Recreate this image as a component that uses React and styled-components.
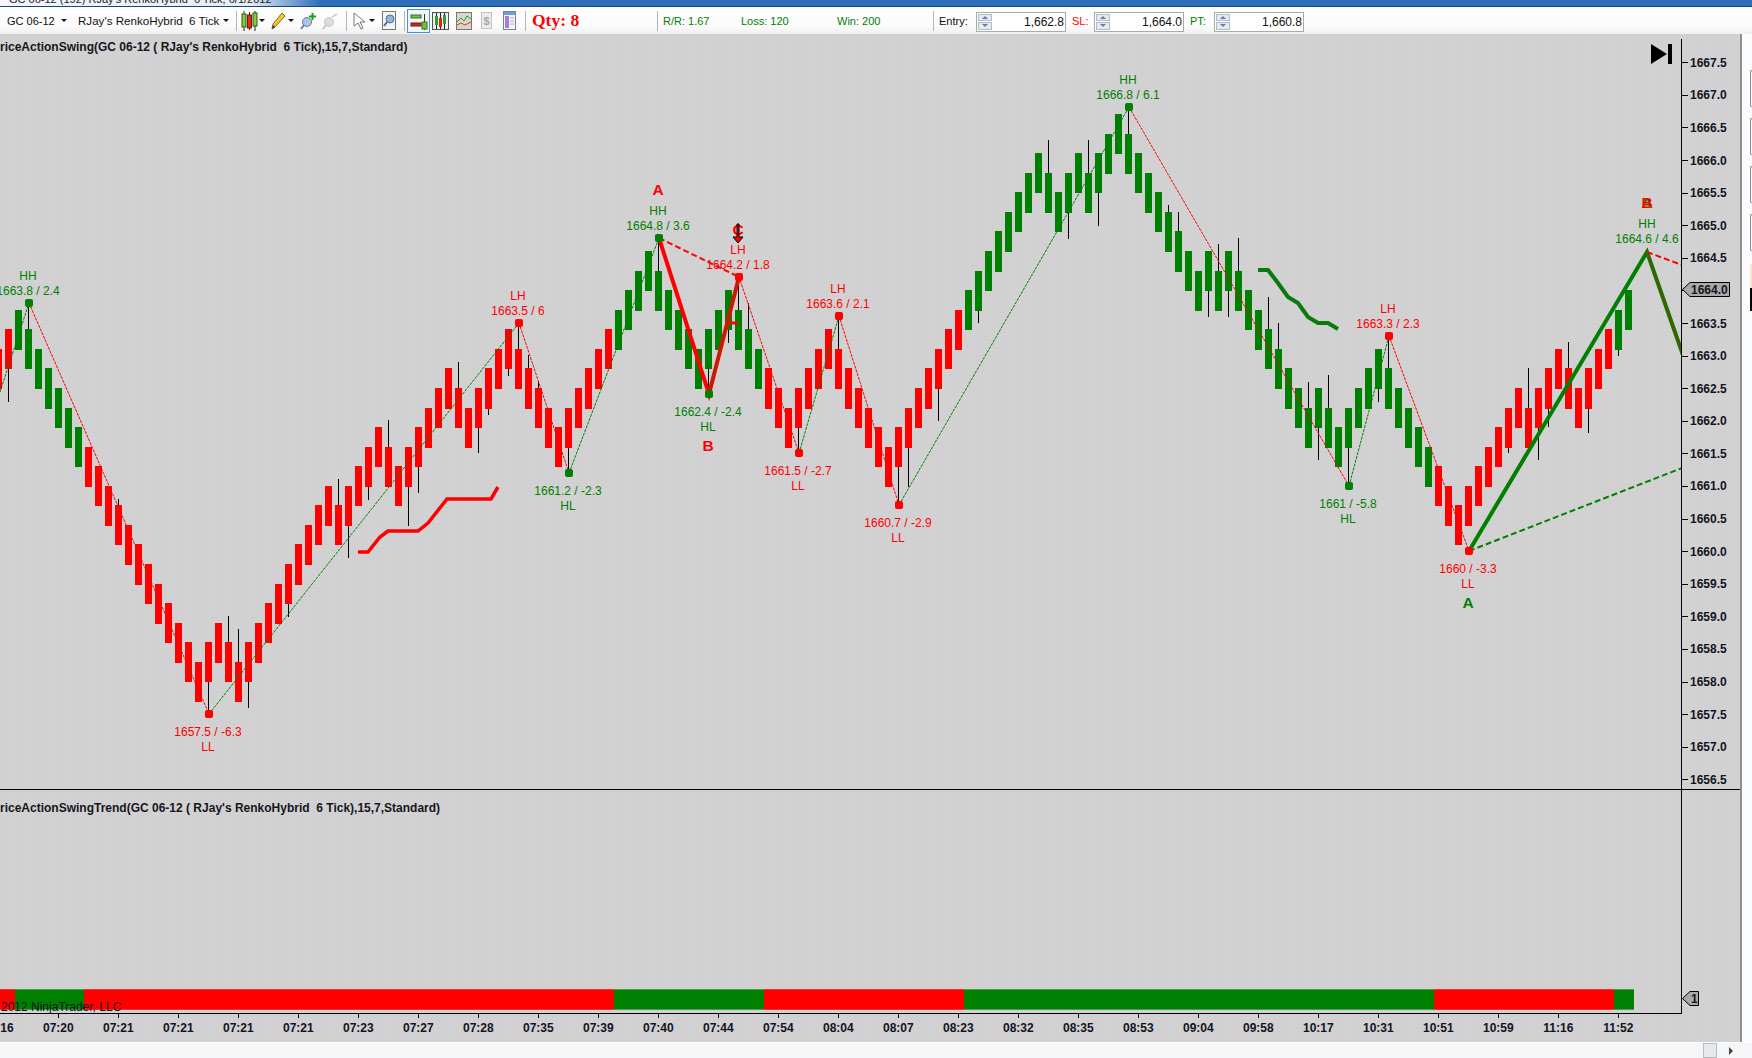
import React from "react";
import styled, { createGlobalStyle } from "styled-components";

const RED = "#ff0000";
const GREEN = "#008000";

// renko bars: top level of each brick starting at column -1
const levels = [
  2, 1, 0, 1, 2, 3, 4, 5, 6, 7, 8, 9, 10, 11, 12, 13, 14, 15, 16, 17, 18, 17, 16, 17, 18, 17, 16, 15, 14, 13, 12, 11,
  10, 9, 10, 9, 8, 7, 6, 7, 8, 7, 6, 5, 4, 3, 4, 5, 4, 3, 2, 1, 2, 3, 4, 5, 6, 5, 4, 3, 2, 1, 0, -1, -2, -3, -2, -1,
  0, 1, 2, 1, 0, -1, 0, 1, 2, 3, 4, 5, 4, 3, 2, 1, 2, 3, 4, 5, 6, 7, 6, 5, 4, 3, 2, 1, 0, -1, -2, -3, -4, -5, -6, -7,
  -8, -7, -6, -7, -8, -7, -8, -9, -10, -9, -8, -7, -6, -5, -4, -3, -2, -3, -2, -3, -2, -1, 0, 1, 2, 3, 4, 5, 4, 5, 6,
  5, 4, 3, 2, 3, 4, 5, 6, 7, 8, 9, 10, 9, 8, 7, 6, 5, 4, 5, 4, 3, 2, 3, 4, 3, 2, 1, 0, -1,
];

// trend runs, first column and last column of each colour
const runs = [
  { from: -1, to: 0, color: RED, left: 0, right: 14.5 },
  { from: 1, to: 7, color: GREEN, left: 14.5, right: 84 },
  { from: 8, to: 60, color: RED, left: 84, right: 614 },
  { from: 61, to: 75, color: GREEN, left: 614, right: 764 },
  { from: 76, to: 95, color: RED, left: 764, right: 964 },
  { from: 96, to: 142, color: GREEN, left: 964, right: 1434 },
  { from: 143, to: 160, color: RED, left: 1434, right: 1614 },
  { from: 161, to: 162, color: GREEN, left: 1614, right: 1634 },
];

// column: [wick top y, wick bottom y]
const wicks = {
  0: [0, 402], 2: [303, 0], 11: [499, 0], 20: [0, 713], 22: [616, 0], 23: [629, 0], 24: [0, 708], 28: [0, 617],
  33: [479, 0], 34: [0, 558], 36: [0, 500], 38: [420, 0], 40: [0, 526], 41: [0, 493], 45: [362, 0], 47: [0, 453],
  48: [0, 415], 50: [0, 376], 51: [323, 0], 52: [355, 0], 53: [381, 0], 56: [0, 473], 65: [238, 0], 70: [0, 393],
  72: [0, 343], 73: [277, 0], 74: [303, 0], 79: [0, 453], 83: [316, 0], 89: [0, 505], 90: [0, 487], 93: [0, 421],
  97: [0, 323], 104: [140, 0], 106: [0, 239], 108: [140, 0], 109: [0, 226], 112: [107, 0], 116: [205, 0],
  117: [212, 0], 120: [0, 317], 121: [244, 0], 122: [0, 317], 123: [238, 0], 126: [297, 0], 127: [323, 0],
  130: [382, 0], 131: [0, 460], 132: [375, 0], 134: [0, 486], 137: [0, 402], 138: [337, 0], 150: [0, 453],
  152: [368, 0], 153: [0, 460], 154: [0, 427], 156: [342, 0], 158: [0, 433], 161: [0, 356],
};

const swingPoints = [
  [0, 392], [29, 303, GREEN], [209, 714, RED], [519, 323, RED], [569, 473, GREEN], [659, 238, GREEN], [709, 394, GREEN],
  [739, 277, RED], [799, 453, RED], [839, 316, RED], [899, 505, RED], [1129, 107, GREEN], [1349, 486, GREEN],
  [1389, 336, RED], [1469, 551, RED],
];

const swingLabels = [
  { x: 28, y: 276, text: "HH", color: GREEN },
  { x: 28, y: 291, text: "1663.8 / 2.4", color: GREEN },
  { x: 208, y: 732, text: "1657.5 / -6.3", color: RED },
  { x: 208, y: 747, text: "LL", color: RED },
  { x: 518, y: 296, text: "LH", color: RED },
  { x: 518, y: 311, text: "1663.5 / 6", color: RED },
  { x: 568, y: 491, text: "1661.2 / -2.3", color: GREEN },
  { x: 568, y: 506, text: "HL", color: GREEN },
  { x: 658, y: 211, text: "HH", color: GREEN },
  { x: 658, y: 226, text: "1664.8 / 3.6", color: GREEN },
  { x: 708, y: 412, text: "1662.4 / -2.4", color: GREEN },
  { x: 708, y: 427, text: "HL", color: GREEN },
  { x: 738, y: 250, text: "LH", color: RED },
  { x: 738, y: 265, text: "1664.2 / 1.8", color: RED },
  { x: 838, y: 289, text: "LH", color: RED },
  { x: 838, y: 304, text: "1663.6 / 2.1", color: RED },
  { x: 798, y: 471, text: "1661.5 / -2.7", color: RED },
  { x: 798, y: 486, text: "LL", color: RED },
  { x: 898, y: 523, text: "1660.7 / -2.9", color: RED },
  { x: 898, y: 538, text: "LL", color: RED },
  { x: 1128, y: 80, text: "HH", color: GREEN },
  { x: 1128, y: 95, text: "1666.8 / 6.1", color: GREEN },
  { x: 1348, y: 504, text: "1661 / -5.8", color: GREEN },
  { x: 1348, y: 519, text: "HL", color: GREEN },
  { x: 1388, y: 309, text: "LH", color: RED },
  { x: 1388, y: 324, text: "1663.3 / 2.3", color: RED },
  { x: 1468, y: 569, text: "1660 / -3.3", color: RED },
  { x: 1468, y: 584, text: "LL", color: RED },
  { x: 1647, y: 224, text: "HH", color: GREEN },
  { x: 1647, y: 239, text: "1664.6 / 4.6", color: GREEN },
];

const abcLabels = [
  { x: 658, y: 189, text: "A", color: RED },
  { x: 708, y: 445, text: "B", color: RED },
  { x: 738, y: 229, text: "C", color: RED },
  { x: 1468, y: 602, text: "A", color: GREEN },
  { x: 1647, y: 202, text: "A", color: GREEN },
  { x: 1647, y: 202, text: "B", color: RED },
];

const priceTicks = Array.from({ length: 23 }, (_, i) => (1667.5 - i * 0.5).toFixed(1));

const times = [
  "07:16", "07:20", "07:21", "07:21", "07:21", "07:21", "07:23", "07:27", "07:28", "07:35", "07:39", "07:40", "07:44",
  "07:54", "08:04", "08:07", "08:23", "08:32", "08:35", "08:53", "09:04", "09:58", "10:17", "10:31", "10:51", "10:59",
  "11:16", "11:52",
];

const levelY = (n) => Math.round(309.7 + 19.56 * n);
const priceY = (i) => 62.3 + i * 32.59;

function colorOf(column) {
  const run = runs.find((r) => column >= r.from && column <= r.to);
  return run.color;
}

const GlobalStyle = createGlobalStyle`
  html, body {
    margin: 0;
    padding: 0;
    overflow: hidden;
    background: #ffffff;
  }
  body {
    font-family: "Liberation Sans", Arial, sans-serif;
  }
`;

const Page = styled.div`
  width: 1752px;
  height: 1058px;
  display: flex;
  flex-direction: column;
  overflow: hidden;
`;

const TitleBar = styled.div`
  height: 6px;
  flex: none;
  overflow: hidden;
  background: linear-gradient(90deg, #f2f5f9 0, #e8edf3 250px, #2f6fb9 320px, #2f6fb9 100%);
  border-bottom: 1px solid #17467f;
`;

const TitleText = styled.div`
  margin: -8px 0 0 9px;
  font-size: 11px;
  line-height: 14px;
  color: #222222;
  white-space: pre;
`;

const Toolbar = styled.div`
  height: 27px;
  flex: none;
  display: flex;
  align-items: center;
  padding-left: 7px;
  background: linear-gradient(180deg, #ffffff 0, #fbfbfb 70%, #f0f0f0 100%);
`;

const ToolText = styled.span`
  flex: none;
  width: ${(p) => p.$w}px;
  margin-left: ${(p) => p.$ml || 0}px;
  font-size: ${(p) => p.$size || 11}px;
  color: ${(p) => p.$color || "#111111"};
  white-space: pre;
`;

const Caret = styled.span`
  flex: none;
  width: 7px;
  height: 3px;
  margin-left: ${(p) => p.$ml || 0}px;
  display: flex;
  justify-content: center;
  &::before {
    content: "";
    border-left: 3px solid transparent;
    border-right: 3px solid transparent;
    border-top: 3px solid #111111;
  }
`;

const Separator = styled.span`
  flex: none;
  width: 1px;
  height: 20px;
  margin-left: ${(p) => p.$ml}px;
  background: #b4b4b4;
`;

const ToolIcon = styled.svg`
  flex: none;
  margin-left: ${(p) => p.$ml || 0}px;
`;

const ActiveTool = styled.span`
  flex: none;
  box-sizing: border-box;
  width: 23px;
  height: 24px;
  margin-left: ${(p) => p.$ml}px;
  margin-right: -1px;
  border: 1px solid #4a90d8;
  background: #eef6fd;
  display: flex;
  align-items: center;
  justify-content: center;
`;

const Qty = styled.span`
  flex: none;
  width: 47px;
  margin-left: 6px;
  font-family: "Liberation Serif", "Times New Roman", serif;
  font-weight: 700;
  font-size: 17.5px;
  color: ${RED};
  white-space: pre;
`;

const SpinBox = styled.span`
  flex: none;
  box-sizing: border-box;
  width: 90px;
  height: 20px;
  margin-top: 2px;
  display: flex;
  align-items: center;
  background: #ffffff;
  border: 1px solid #a6aca6;
`;

const SpinButtons = styled.span`
  flex: none;
  width: 14px;
  height: 16px;
  margin-left: 1px;
  display: flex;
  flex-direction: column;
  gap: 1px;
`;

const SpinButton = styled.span`
  flex: 1;
  display: flex;
  align-items: center;
  justify-content: center;
  background: #e4eaf2;
  border: 1px solid #b3bdc9;
  box-sizing: border-box;
  &::before {
    content: "";
    border-left: 3px solid transparent;
    border-right: 3px solid transparent;
    ${(p) => (p.$down ? "border-top: 3px solid #6a7ba8;" : "border-bottom: 3px solid #6a7ba8;")}
  }
`;

const SpinValue = styled.span`
  flex: 1;
  text-align: right;
  padding-right: 1px;
  font-size: 12px;
  color: #111111;
`;

const ChartRow = styled.div`
  height: 1008px;
  flex: none;
  display: flex;
`;

const Main = styled.div`
  width: 1740px;
  flex: none;
  display: flex;
  flex-direction: column;
  background-color: #d1d2d1;
  background-image: radial-gradient(circle, rgba(196, 192, 218, 0.22) 0.7px, transparent 0.9px),
    radial-gradient(circle, rgba(226, 196, 204, 0.24) 0.7px, transparent 0.9px);
  background-size: 4px 4px, 5px 3px;
  border-right: 2px solid #8c8f94;
`;

const PricePanel = styled.div`
  position: relative;
  height: 755px;
  flex: none;
  border-bottom: 1px solid #000000;
`;

const PanelTitle = styled.div`
  position: absolute;
  left: 0;
  top: ${(p) => p.$top}px;
  font-size: 12px;
  font-weight: 700;
  line-height: 14px;
  color: #16161c;
  white-space: pre;
`;

const PlotSvg = styled.svg`
  display: block;
`;

const SwingLabel = styled.text`
  font-family: "Liberation Sans", Arial, sans-serif;
  font-size: 12px;
  fill: ${(p) => p.$color};
  text-anchor: middle;
`;

const WaveLabel = styled.text`
  font-family: "Liberation Sans", Arial, sans-serif;
  font-size: 15.5px;
  font-weight: 700;
  fill: ${(p) => p.$color};
  text-anchor: middle;
`;

const AxisLabel = styled.text`
  font-family: "Liberation Sans", Arial, sans-serif;
  font-size: 12px;
  font-weight: 700;
  fill: #14141e;
`;

const TrendPanel = styled.div`
  position: relative;
  height: 224px;
  flex: none;
`;

const TrendPlot = styled.div`
  box-sizing: border-box;
  width: 1682px;
  height: 224px;
  border-right: 1px solid #000000;
  border-bottom: 1px solid #000000;
  overflow: hidden;
  display: flex;
  align-items: flex-end;
  padding-bottom: 3px;
`;

const TrendSegment = styled.div`
  height: 21px;
  flex: none;
  box-sizing: border-box;
  width: ${(p) => p.$w}px;
  background: ${(p) => p.$color};
  border-top: 1px solid ${(p) => (p.$color === RED ? "#f03030" : "#4f9a4f")};
  border-bottom: 1px solid ${(p) => (p.$color === RED ? "#f03030" : "#4f9a4f")};
`;

const Copyright = styled.span`
  position: absolute;
  left: 1px;
  bottom: 0;
  font-size: 12px;
  line-height: 13px;
  color: #14141e;
  white-space: pre;
`;

const PanelMarker = styled.svg`
  position: absolute;
  left: 1682px;
  top: 201px;
`;

const TimeAxis = styled.div`
  flex: 1;
  width: 1739px;
  display: flex;
  overflow: hidden;
  margin-left: -31.7px;
`;

const TimeCell = styled.div`
  position: relative;
  flex: none;
  width: 60px;
  padding-top: 7px;
  text-align: center;
  font-size: 12px;
  font-weight: 700;
  line-height: 14px;
  color: #14141e;
  &::before {
    content: "";
    position: absolute;
    left: 30px;
    top: 0;
    width: 1px;
    height: 4px;
    background: #000000;
  }
`;

const SidePanel = styled.div`
  flex: 1;
  background: #fbfcfe;
  padding-top: 36px;
  display: flex;
  flex-direction: column;
  align-items: flex-end;
  gap: 11px;
`;

const SideButton = styled.div`
  box-sizing: border-box;
  width: 2px;
  height: 37px;
  border: 1px solid #8d8d8d;
  border-right: none;
  border-radius: 3px 0 0 3px;
`;

const SideSwatch = styled.div`
  width: 2px;
  height: 47px;
  margin-top: 2px;
  background: linear-gradient(180deg, #fbe6cf 0, #fbe6cf 50%, #000000 50%, #000000 100%);
`;

const StatusBar = styled.div`
  flex: 1;
  display: flex;
  align-items: center;
  background: #f4f6f8;
  border-top: 1px solid #ffffff;
`;

const ScrollThumb = styled.div`
  box-sizing: border-box;
  width: 14px;
  height: 15px;
  margin-left: 1703px;
  background: #e6e9ec;
  border: 1px solid #b9bdc2;
`;

const ScrollArrow = styled.div`
  margin-left: 12px;
  border-top: 4px solid transparent;
  border-bottom: 4px solid transparent;
  border-left: 4px solid #444444;
`;

function CandlesIcon() {
  return (
    <ToolIcon $ml={4} width="17" height="20" viewBox="0 0 17 20">
      <path d="M3 0v20M8.500 1v18M14 0v20" stroke="#222" />
      <rect x="1" y="3" width="4" height="13" fill="#7fd03a" stroke="#2b5a12" />
      <rect x="6.500" y="4" width="4" height="13" fill="#e02b20" stroke="#7a1510" />
      <rect x="12" y="2" width="4" height="13" fill="#7fd03a" stroke="#2b5a12" />
    </ToolIcon>
  );
}

function PencilIcon() {
  return (
    <ToolIcon $ml={6} width="15" height="18" viewBox="0 0 15 18">
      <path d="M1 17l1-5L11 1l3 3L4 15z" fill="#f3c92f" stroke="#8a6a12" />
      <path d="M1 17l1-4 2 2z" fill="#333" />
    </ToolIcon>
  );
}

function MarkerIcon({ $ml, faded }) {
  return (
    <ToolIcon $ml={$ml} width="17" height="18" viewBox="0 0 17 18">
      <circle cx="7" cy="10" r="4.500" fill={faded ? "#dcdcdc" : "#a9c6e8"} stroke={faded ? "#c4c4c4" : "#6b7f99"} />
      <path d="M4 13l-3 4" stroke={faded ? "#c4c4c4" : "#6b7f99"} strokeWidth="2" />
      {faded ? (
        <path d="M10 5l5-3" stroke="#cfcfcf" strokeWidth="2" />
      ) : (
        <path d="M12.500 1v7M9 4.500h7" stroke="#18a018" strokeWidth="2" />
      )}
    </ToolIcon>
  );
}

function CursorIcon() {
  return (
    <ToolIcon $ml={6} width="13" height="18" viewBox="0 0 13 18">
      <path d="M1 1l11 9-5 0 3 6-2 1-3-6-4 3z" fill="#ffffff" stroke="#777" />
    </ToolIcon>
  );
}

function ZoomIcon() {
  return (
    <ToolIcon $ml={7} width="14" height="19" viewBox="0 0 14 19">
      <rect x="0.500" y="0.500" width="13" height="18" fill="#f4f4f4" stroke="#777" />
      <circle cx="8" cy="8" r="4" fill="#8db8e6" stroke="#5a6e88" />
      <path d="M5 11l-3 4" stroke="#5a6e88" strokeWidth="2" />
    </ToolIcon>
  );
}

function BarsIcon() {
  return (
    <svg width="18" height="20" viewBox="0 0 18 20">
      <path d="M14.500 3v16" stroke="#333" />
      <rect x="1" y="4" width="10" height="3" fill="#6fc23a" stroke="#3c6f1c" />
      <rect x="1" y="12" width="10" height="3" fill="#d8261c" stroke="#7a1510" />
      <rect x="12" y="11" width="5" height="7" fill="#6fc23a" stroke="#3c6f1c" />
    </svg>
  );
}

function CandleBoxIcon() {
  return (
    <ToolIcon $ml={3} width="17" height="20" viewBox="0 0 17 20">
      <rect x="0.500" y="1.500" width="16" height="17" fill="#eeeeee" stroke="#555" />
      <path d="M4.500 2v16M8.500 2v16M12.500 2v16" stroke="#222" />
      <rect x="3" y="5" width="3" height="9" fill="#2fa02f" />
      <rect x="7" y="7" width="3" height="9" fill="#d8261c" />
      <rect x="11" y="4" width="3" height="9" fill="#2fa02f" />
    </ToolIcon>
  );
}

function LineChartIcon() {
  return (
    <ToolIcon $ml={7} width="16" height="18" viewBox="0 0 16 18">
      <rect x="0.500" y="0.500" width="15" height="17" fill="#d8d8c8" stroke="#777" />
      <path d="M1 10l4-4 3 3 3-5 4 3" fill="none" stroke="#2a9a2a" />
      <path d="M1 13l4-2 4 2 6-3" fill="none" stroke="#d83a2a" />
    </ToolIcon>
  );
}

function DollarIcon() {
  return (
    <ToolIcon $ml={9} width="11" height="17" viewBox="0 0 11 17">
      <rect x="0.500" y="0.500" width="10" height="16" fill="#ececec" stroke="#c2c2c2" />
      <text x="5.500" y="13" textAnchor="middle" fontSize="11" fontWeight="700" fontFamily="Liberation Sans" fill="#a8a8a8">
        $
      </text>
    </ToolIcon>
  );
}

function FormIcon() {
  return (
    <ToolIcon $ml={11} width="13" height="19" viewBox="0 0 13 19">
      <rect x="0.500" y="0.500" width="12" height="18" fill="#f2f4fa" stroke="#777f99" />
      <rect x="1" y="1" width="11" height="3" fill="#6aa0dc" />
      <rect x="2" y="5" width="4" height="12" fill="#a87ae0" />
      <path d="M7 7h4M7 10h4M7 13h4" stroke="#b0b0b0" />
    </ToolIcon>
  );
}

function SpinInput({ value }) {
  return (
    <SpinBox>
      <SpinButtons>
        <SpinButton />
        <SpinButton $down />
      </SpinButtons>
      <SpinValue>{value}</SpinValue>
    </SpinBox>
  );
}

function ChartToolbar() {
  return (
    <Toolbar>
      <ToolText $w={53}>GC 06-12</ToolText>
      <Caret />
      <ToolText $w={144} $ml={11} $size={11.6}>
        RJay's RenkoHybrid  6 Tick
      </ToolText>
      <Caret />
      <Separator $ml={7} />
      <CandlesIcon />
      <Caret />
      <PencilIcon />
      <Caret $ml={1} />
      <MarkerIcon $ml={6} />
      <MarkerIcon $ml={5} faded />
      <Separator $ml={7} />
      <CursorIcon />
      <Caret $ml={2} />
      <ZoomIcon />
      <Separator $ml={8} />
      <ActiveTool $ml={2}>
        <BarsIcon />
      </ActiveTool>
      <CandleBoxIcon />
      <LineChartIcon />
      <DollarIcon />
      <FormIcon />
      <Separator $ml={9} />
      <Qty>Qty: 8</Qty>
      <Separator $ml={78} />
      <ToolText $w={78} $ml={5} $color={GREEN}>
        R/R: 1.67
      </ToolText>
      <ToolText $w={96} $color={GREEN}>
        Loss: 120
      </ToolText>
      <ToolText $w={96} $color={GREEN}>
        Win: 200
      </ToolText>
      <Separator $ml={0} />
      <ToolText $w={37} $ml={5}>
        Entry:
      </ToolText>
      <SpinInput value="1,662.8" />
      <ToolText $w={22} $ml={6} $color={RED}>
        SL:
      </ToolText>
      <SpinInput value="1,664.0" />
      <ToolText $w={24} $ml={6} $color={GREEN}>
        PT:
      </ToolText>
      <SpinInput value="1,660.8" />
    </Toolbar>
  );
}

function Bricks() {
  return levels.map((n, i) => {
    const column = i - 1;
    const x = 5 + 10 * column;
    const top = levelY(n);
    const wick = wicks[column];
    return (
      <g key={column}>
        {wick && wick[0] > 0 && <rect x={x + 3} y={wick[0]} width="1" height={top - wick[0]} fill="#000" />}
        {wick && wick[1] > 0 && <rect x={x + 3} y={levelY(n + 2)} width="1" height={wick[1] - levelY(n + 2)} fill="#000" />}
        <rect x={x} y={top} width="7" height={levelY(n + 2) - top + 1} fill={colorOf(column)} />
      </g>
    );
  });
}

function SwingLines() {
  return swingPoints.slice(1).map((p, i) => {
    const prev = swingPoints[i];
    const color = p[1] > prev[1] ? RED : GREEN;
    return (
      <line
        key={p[0]}
        x1={prev[0]}
        y1={prev[1]}
        x2={p[0]}
        y2={p[1]}
        stroke={color}
        strokeWidth="1"
        strokeDasharray="3 1"
      />
    );
  });
}

function PriceAxis() {
  return (
    <g>
      <line x1="1681.5" y1="39" x2="1681.5" y2="789" stroke="#000" />
      {priceTicks.map((label, i) => (
        <g key={label}>
          <line x1="1682" x2="1688" y1={Math.round(priceY(i)) + 0.5} y2={Math.round(priceY(i)) + 0.5} stroke="#000" />
          <AxisLabel x="1690" y={priceY(i) + 4.5}>
            {label}
          </AxisLabel>
        </g>
      ))}
      <polygon points="1682.500,289.500 1690,282.500 1729.500,282.500 1729.500,296.500 1690,296.500" fill="#a9a9a9" stroke="#000" />
      <AxisLabel x="1691" y="294">
        1664.0
      </AxisLabel>
    </g>
  );
}

function PriceChart() {
  return (
    <PlotSvg width="1740" height="755" viewBox="0 34 1740 755">
      <defs>
        <clipPath id="plot">
          <rect x="0" y="34" width="1681" height="755" />
        </clipPath>
      </defs>
      <g clipPath="url(#plot)">
        <Bricks />
        <polyline
          points="358,552 368,552 380,537 388,531 418,531 428,523 447,499 491,499 498,487"
          fill="none"
          stroke={RED}
          strokeWidth="3.5"
        />
        <polyline
          points="1258,270 1268,270 1278,283 1288,297 1298,303 1308,317 1318,323 1328,323 1338,329"
          fill="none"
          stroke="#0a7a0a"
          strokeWidth="4"
        />
        <polyline points="659,238 709,394 739,277" fill="none" stroke={RED} strokeWidth="4" />
        <line x1="659" y1="238" x2="739" y2="277" stroke={RED} strokeWidth="2" strokeDasharray="6 3" />
        <line x1="726" y1="323" x2="738" y2="323" stroke={RED} strokeWidth="3" />
        <polyline points="1469,551 1647,252 1684,358" fill="none" stroke={GREEN} strokeWidth="4" />
        <line x1="1469" y1="551" x2="1682" y2="468" stroke={GREEN} strokeWidth="2" strokeDasharray="6 3" />
        <line x1="1647" y1="252" x2="1682" y2="265" stroke={RED} strokeWidth="2" strokeDasharray="6 3" />
        <line x1="1647" y1="252" x2="1684" y2="358" stroke={RED} strokeWidth="1" strokeDasharray="3 1" />
        <SwingLines />
        {swingPoints
          .filter((p) => p[2])
          .map((p) => (
            <rect key={p[0]} x={p[0] - 4} y={p[1] - 4} width="8" height="8" rx="2" fill={p[2]} />
          ))}
        {swingLabels.map((l) => (
          <SwingLabel key={`${l.x}-${l.y}`} x={l.x} y={l.y + 4} $color={l.color}>
            {l.text}
          </SwingLabel>
        ))}
        {abcLabels.map((l) => (
          <WaveLabel key={`${l.x}-${l.text}`} x={l.x} y={l.y + 5.5} $color={l.color}>
            {l.text}
          </WaveLabel>
        ))}
        <polygon
          points="737,224 739,224 739,237 743,237 738,243 733,237 737,237"
          fill={RED}
          stroke="#000"
          strokeWidth="1"
        />
        <polygon points="1651,44 1667,54 1651,64" fill="#000" />
        <rect x="1668" y="44" width="4" height="20" fill="#000" />
      </g>
      <PriceAxis />
    </PlotSvg>
  );
}

function TrendBlock() {
  return (
    <TrendPanel>
      <TrendPlot>
        {runs.map((r) => (
          <TrendSegment key={r.from} $w={r.right - r.left} $color={r.color} />
        ))}
      </TrendPlot>
      <PanelTitle $top={11}>riceActionSwingTrend(GC 06-12 ( RJay's RenkoHybrid  6 Tick),15,7,Standard)</PanelTitle>
      <Copyright>2012 NinjaTrader, LLC</Copyright>
      <PanelMarker width="18" height="16" viewBox="0 0 18 16">
        <polygon points="0.500,7.500 8,0.500 16.500,0.500 16.500,14.500 8,14.500" fill="#a9a9a9" stroke="#000" />
        <AxisLabel x="9" y="12">
          1
        </AxisLabel>
      </PanelMarker>
    </TrendPanel>
  );
}

export default function App() {
  return (
    <>
      <GlobalStyle />
      <Page>
        <TitleBar>
          <TitleText>GC 06-12 (192) RJay's RenkoHybrid  6 Tick, 6/1/2012</TitleText>
        </TitleBar>
        <ChartToolbar />
        <ChartRow>
          <Main>
            <PricePanel>
              <PriceChart />
              <PanelTitle $top={6}>riceActionSwing(GC 06-12 ( RJay's RenkoHybrid  6 Tick),15,7,Standard)</PanelTitle>
            </PricePanel>
            <TrendBlock />
            <TimeAxis>
              {times.map((t, i) => (
                <TimeCell key={i}>{t}</TimeCell>
              ))}
            </TimeAxis>
          </Main>
          <SidePanel>
            <SideButton />
            <SideButton />
            <SideButton />
            <SideButton />
            <SideSwatch />
          </SidePanel>
        </ChartRow>
        <StatusBar>
          <ScrollThumb />
          <ScrollArrow />
        </StatusBar>
      </Page>
    </>
  );
}
